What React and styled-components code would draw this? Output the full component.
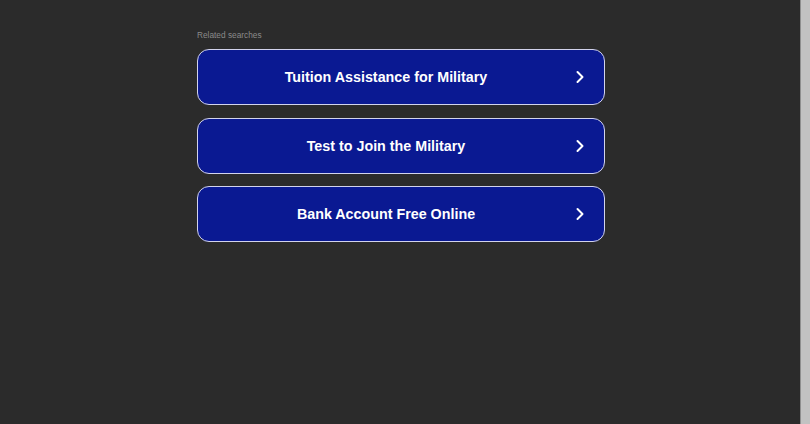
import React from "react";
import styled, { createGlobalStyle } from "styled-components";

const GlobalStyle = createGlobalStyle`
  html, body {
    margin: 0;
    padding: 0;
    background: #2b2b2b;
    font-family: "Liberation Sans", Arial, sans-serif;
  }
`;

const links = [
  "Tuition Assistance for Military",
  "Test to Join the Military",
  "Bank Account Free Online",
];

const Chevron = () => (
  <svg width="10" height="14" viewBox="0 0 10 14" fill="none">
    <path
      d="M2.5 2 L7.5 7 L2.5 12"
      stroke="#fff"
      strokeWidth="2"
      strokeLinecap="round"
      strokeLinejoin="round"
    />
  </svg>
);

const App = () => {
  return (
    <Page>
      <GlobalStyle />
      <Main>
        <Block>
          <Title>Related searches</Title>
          <List>
            {links.map((label) => (
              <LinkButton key={label} href="#">
                <Label>{label}</Label>
                <Arrow>
                  <Chevron />
                </Arrow>
              </LinkButton>
            ))}
          </List>
        </Block>
      </Main>
      <Scrollbar />
    </Page>
  );
};

const Page = styled.div`
  display: flex;
  width: 810px;
  height: 424px;
  overflow: hidden;
`;
const Main = styled.div`
  flex: 1;
  display: flex;
  justify-content: center;
  padding-top: 30px;
  padding-left: 2px;
`;
const Block = styled.div`
  width: 408px;
`;
const Title = styled.div`
  font-size: 8.3px;
  color: #8a8a8a;
  line-height: 11px;
  margin-bottom: 8px;
`;
const List = styled.div`
  display: flex;
  flex-direction: column;
  gap: 12.5px;
`;
const LinkButton = styled.a`
  display: flex;
  align-items: center;
  box-sizing: border-box;
  height: 56px;
  padding: 0 19px 0 0;
  border: 1.5px solid #d2d3ec;
  border-radius: 12px;
  background: #0a1992;
  text-decoration: none;
`;
const Label = styled.span`
  flex: 1;
  text-align: center;
  color: #fff;
  font-size: 14.3px;
  font-weight: bold;
  padding-right: 1px;
`;
const Arrow = styled.span`
  display: flex;
  align-items: center;
`;
const Scrollbar = styled.div`
  width: 9px;
  height: 424px;
  background: #c2c2c2;
  border-left: 1px solid #8f8f8f;
`;

export default App;
